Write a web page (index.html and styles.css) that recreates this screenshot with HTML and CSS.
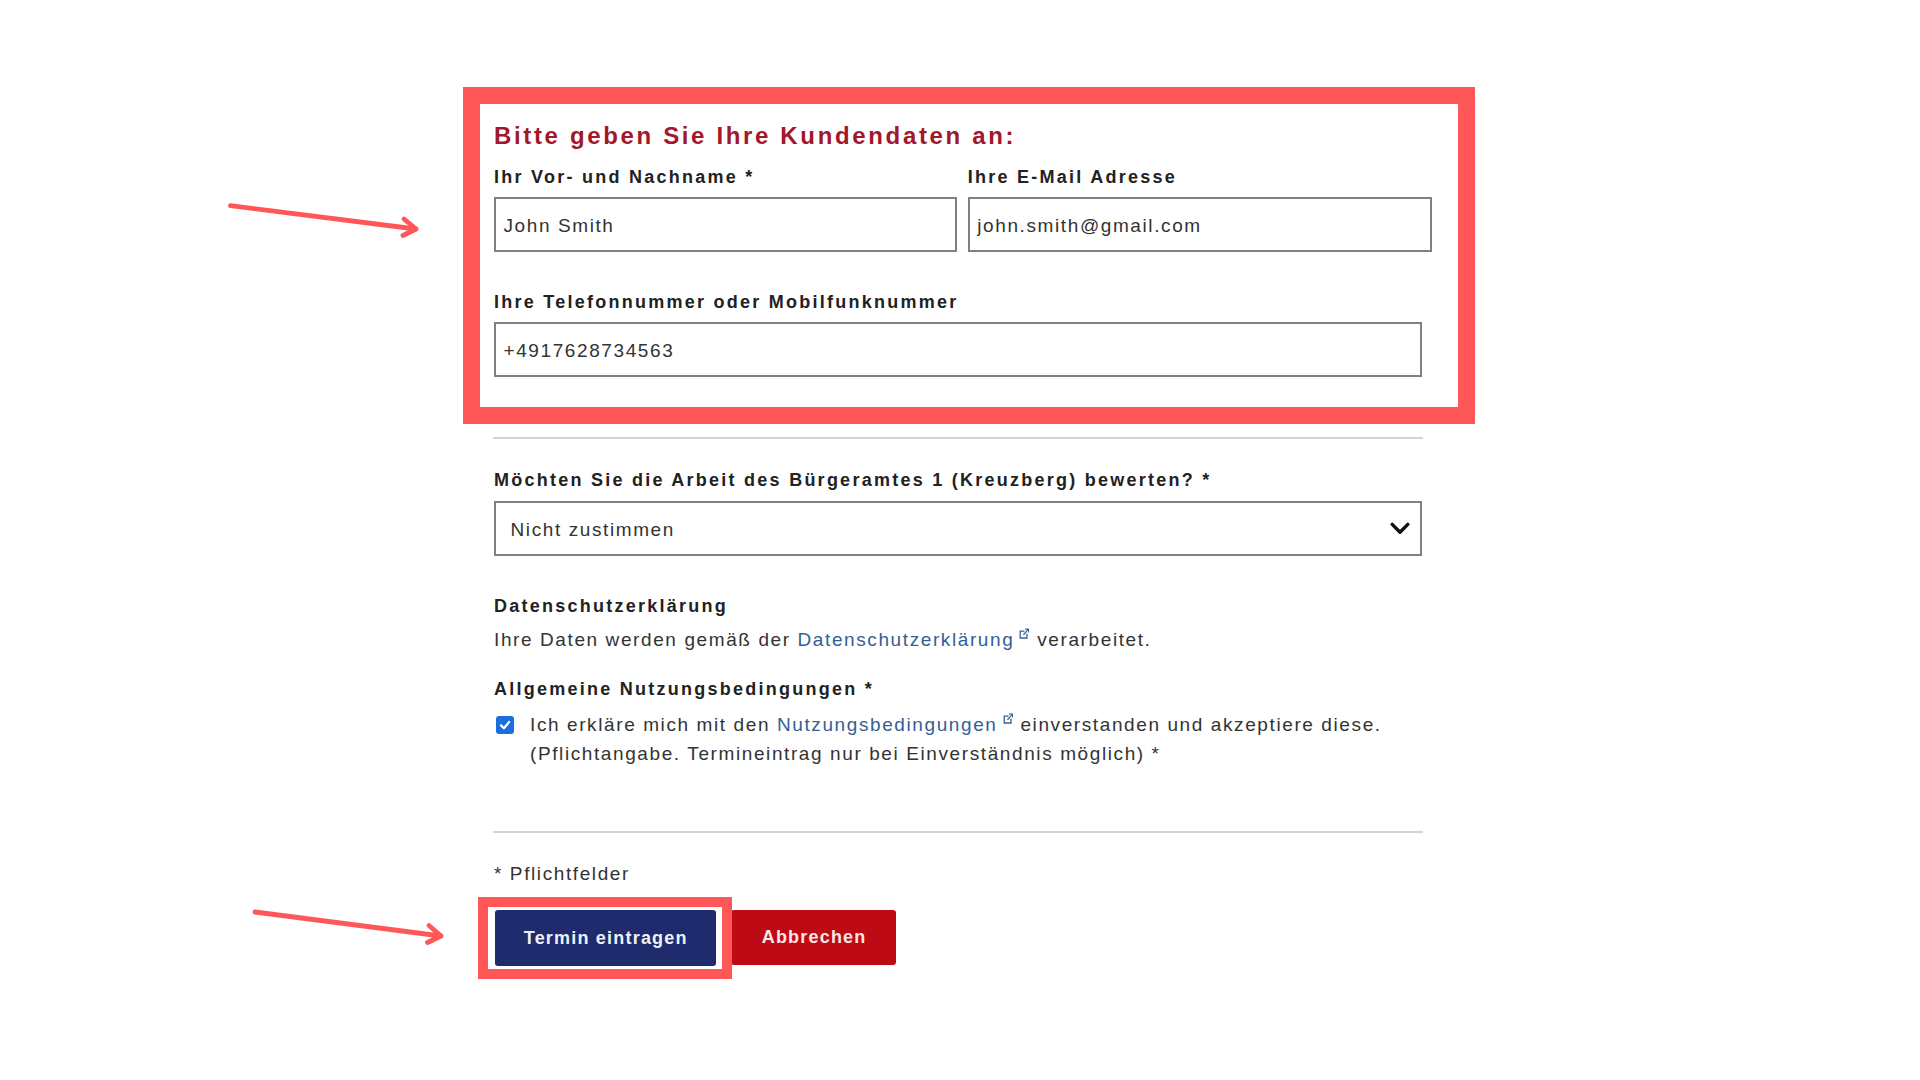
FILE: index.html
```html
<!DOCTYPE html>
<html lang="de">
<head>
<meta charset="utf-8">
<title>Kundendaten</title>
<link rel="stylesheet" href="styles.css">
</head>
<body>
<main class="page">
  <section class="customer">
    <h2 class="customer-title">Bitte geben Sie Ihre Kundendaten an:</h2>
    <div class="field-row">
      <div class="field">
        <label class="field-label" for="name">Ihr Vor- und Nachname *</label>
        <input class="text-input" id="name" type="text" value="John Smith">
      </div>
      <div class="field">
        <label class="field-label" for="email">Ihre E-Mail Adresse</label>
        <input class="text-input" id="email" type="text" value="john.smith@gmail.com">
      </div>
    </div>
    <div class="field field-phone">
      <label class="field-label" for="phone">Ihre Telefonnummer oder Mobilfunknummer</label>
      <input class="text-input" id="phone" type="text" value="+4917628734563">
    </div>
  </section>

  <div class="form-rest">
    <hr class="divider divider-top">

    <div class="field field-rating">
      <span class="field-label">Möchten Sie die Arbeit des Bürgeramtes 1 (Kreuzberg) bewerten? *</span>
      <div class="select-box">
        <span class="select-value">Nicht zustimmen</span>
        <svg class="select-chevron" viewBox="0 0 20 13" aria-hidden="true"><polyline points="2.2,2.4 10,10.2 17.8,2.4" fill="none" stroke="#111" stroke-width="3.4" stroke-linecap="round" stroke-linejoin="round"/></svg>
      </div>
    </div>

    <div class="privacy">
      <h3 class="section-label">Datenschutzerklärung</h3>
      <p class="body-text">Ihre Daten werden gemäß der <a class="ext-link" href="#">Datenschutzerklärung</a><svg class="ext-icon" viewBox="0 0 10 11" aria-hidden="true"><path d="M5.5 3.2H1.2V10H8V5.8" fill="none" stroke="#3a6294" stroke-width="1.3"/><path d="M4.4 6.8L9.2 1.6M6.2 1.1H9.6V4.4" fill="none" stroke="#3a6294" stroke-width="1.3"/></svg> verarbeitet.</p>
    </div>

    <div class="terms">
      <h3 class="section-label">Allgemeine Nutzungsbedingungen *</h3>
      <div class="check-row">
        <span class="checkbox"><svg viewBox="0 0 14 14" aria-hidden="true"><polyline points="3,7.4 5.9,10.3 11.2,3.9" fill="none" stroke="#fff" stroke-width="2.2" stroke-linecap="round" stroke-linejoin="round"/></svg></span>
        <p class="check-text">Ich erkläre mich mit den <a class="ext-link" href="#">Nutzungsbedingungen</a><svg class="ext-icon" viewBox="0 0 10 11" aria-hidden="true"><path d="M5.5 3.2H1.2V10H8V5.8" fill="none" stroke="#3a6294" stroke-width="1.3"/><path d="M4.4 6.8L9.2 1.6M6.2 1.1H9.6V4.4" fill="none" stroke="#3a6294" stroke-width="1.3"/></svg> einverstanden und akzeptiere diese.<br>(Pflichtangabe. Termineintrag nur bei Einverständnis möglich) *</p>
      </div>
    </div>

    <hr class="divider divider-bottom">

    <p class="required-note">* Pflichtfelder</p>

    <div class="actions">
      <span class="primary-wrap">
        <button class="btn btn-primary" type="button">Termin eintragen</button>
        <span class="annot-box"></span>
      </span>
      <button class="btn btn-cancel" type="button">Abbrechen</button>
    </div>
  </div>

  <svg class="annot-arrows" viewBox="0 0 1920 1080" aria-hidden="true">
    <g fill="none" stroke="#ff5757" stroke-width="4.8" stroke-linecap="round" stroke-linejoin="round">
      <path d="M230.5 205.7L416 229"/>
      <polyline points="404,219 416,229 403,235.5"/>
      <path d="M255 912L441 936"/>
      <polyline points="429,925.5 441,936 427.5,942.5"/>
    </g>
  </svg>
</main>
</body>
</html>
```

FILE: styles.css
```css
* {
  box-sizing: border-box;
}

html,
body {
  margin: 0;
  padding: 0;
  background: #ffffff;
}

body {
  font-family: "Liberation Sans", Arial, sans-serif;
  color: #333333;
}

.page {
  position: relative;
  width: 1920px;
  height: 1080px;
  overflow: hidden;
  padding: 87px 0 0 463px;
}

/* highlighted customer block */
.customer {
  width: 1012px;
  border: 17px solid #ff5757;
  padding: 17.5px 0 29.7px 14px;
}

.customer-title {
  margin: 0;
  font-size: 24px;
  line-height: 28px;
  font-weight: 700;
  color: #a3172a;
  letter-spacing: 2.65px;
}

.field-row {
  display: grid;
  grid-template-columns: 463px 464px;
  column-gap: 10.8px;
  margin: 16.3px 0 0 0.3px;
}

.field-label {
  display: block;
  font-size: 18px;
  line-height: 22px;
  font-weight: 700;
  color: #222222;
  letter-spacing: 2.25px;
  margin-bottom: 9.5px;
}

.field-row .field-label {
  margin-left: -0.3px;
}

.text-input {
  display: block;
  width: 100%;
  height: 55px;
  margin: 0;
  border: 2px solid #808080;
  border-radius: 0;
  padding: 3px 6px 0 7.2px;
  background: #ffffff;
  font: 19px "Liberation Sans", Arial, sans-serif;
  letter-spacing: 1.6px;
  color: #333333;
  outline: none;
}

.field-phone {
  width: 930.5px;
  margin-top: 38.5px;
}

.field-phone .text-input {
  width: 927.8px;
  margin-left: 0.3px;
}

/* rest of the form */
.form-rest {
  width: 932px;
  margin-left: 31px;
}

.divider {
  width: 930px;
  height: 2px;
  margin: 0 0 0 -1px;
  border: 0;
  background: #d4d4d4;
}

.divider-top {
  margin-top: 13.5px;
}

.field-rating {
  margin-top: 30px;
}

.select-box {
  display: flex;
  align-items: center;
  justify-content: space-between;
  width: 927.8px;
  height: 55px;
  margin-left: 0.3px;
  border: 2px solid #808080;
  padding: 3px 10px 0 14.2px;
}

.select-value {
  font-size: 19px;
  letter-spacing: 1.6px;
  color: #333333;
}

.select-chevron {
  width: 20px;
  height: 13px;
  margin-top: -3px;
}

.privacy {
  margin-top: 38.8px;
}

.section-label {
  margin: 0;
  font-size: 18px;
  line-height: 22px;
  font-weight: 700;
  color: #222222;
  letter-spacing: 2.25px;
}

.body-text {
  margin: 10.5px 0 0;
  font-size: 19px;
  line-height: 26px;
  letter-spacing: 1.6px;
  color: #333333;
}

.ext-link {
  color: #335f92;
  text-decoration: none;
}

.ext-icon {
  width: 10px;
  height: 11px;
  margin: 0 1px 0 5px;
  vertical-align: 7px;
}

.terms {
  margin-top: 25.2px;
}

.check-row {
  display: flex;
  align-items: flex-start;
  margin-top: 9.2px;
}

.checkbox {
  flex: none;
  display: flex;
  align-items: center;
  justify-content: center;
  width: 18px;
  height: 18px;
  margin: 6px 16px 0 2px;
  border-radius: 3px;
  background: #1a6fdc;
}

.checkbox svg {
  width: 14px;
  height: 14px;
}

.check-text {
  margin: 0;
  font-size: 19px;
  line-height: 29px;
  letter-spacing: 1.6px;
  color: #333333;
}

.divider-bottom {
  margin-top: 63.8px;
}

.required-note {
  margin: 27.9px 0 0;
  font-size: 19px;
  line-height: 26px;
  letter-spacing: 1.6px;
  color: #333333;
}

.actions {
  display: flex;
  align-items: flex-start;
  gap: 15.5px;
  margin-top: 22.5px;
  margin-left: 0.8px;
}

.primary-wrap {
  position: relative;
  display: block;
}

.btn {
  display: block;
  height: 56px;
  padding: 0 28px 0 29px;
  border: 0;
  border-radius: 3px;
  font: 700 18px/56px "Liberation Sans", Arial, sans-serif;
  letter-spacing: 1.2px;
  cursor: pointer;
}

.btn-primary {
  background: #1f2b6c;
  color: #eef0f7;
}

.btn-cancel {
  height: 55px;
  line-height: 55px;
  padding: 0 29.5px 0 30.5px;
  background: #be0a15;
  color: #f8e6e6;
}

/* annotation overlays */
.annot-box {
  position: absolute;
  top: -13px;
  left: -17px;
  right: -16px;
  bottom: -13px;
  border: 10px solid #ff5757;
  pointer-events: none;
}

.annot-arrows {
  position: absolute;
  left: 0;
  top: 0;
  width: 1920px;
  height: 1080px;
  pointer-events: none;
}
```
